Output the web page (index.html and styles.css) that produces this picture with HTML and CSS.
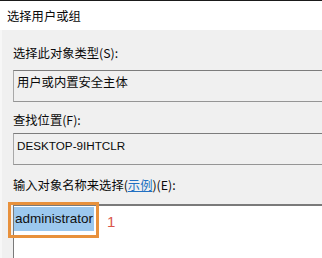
FILE: index.html
```html
<!DOCTYPE html>
<html lang="zh-CN">
<head>
<meta charset="utf-8">
<title>选择用户或组</title>
<link rel="stylesheet" href="styles.css">
</head>
<body>
<div class="dialog">
  <div class="titlebar">选择用户或组</div>
  <div class="content">
    <div class="label label-type">选择此对象类型(S):</div>
    <div class="field">用户或内置安全主体</div>
    <div class="label label-loc">查找位置(F):</div>
    <div class="field field-latin">DESKTOP-9IHTCLR</div>
    <div class="label label-name">输入对象名称来选择(<span class="link">示例</span>)(E):</div>
    <div class="textarea">
      <span class="selected">administrator</span>
      <div class="callout"></div>
      <div class="callout-num">1</div>
    </div>
  </div>
</div>
</body>
</html>
```

FILE: styles.css
```css
html, body {
  margin: 0;
  padding: 0;
}
body {
  width: 322px;
  height: 258px;
  overflow: hidden;
  background: #f0f0f0;
  color: #0a0a0a;
}
.dialog {
  width: 322px;
  height: 258px;
  overflow: hidden;
}
.titlebar {
  height: 29px;
  border-top: 1px solid #1a1a1a;
  background: #ffffff;
  display: flex;
  align-items: center;
  padding-left: 7px;
  font-family: "Noto Sans CJK SC", "Liberation Sans", sans-serif;
  font-size: 12.3px;
  color: #0a0a0a;
}
.content {
  background: #f0f0f0;
  border-left: 2px solid #f7f7f7;
  padding-left: 11px;
  display: flex;
  flex-direction: column;
}
.content > * {
  flex-shrink: 0;
}
.label {
  font-family: "Noto Sans CJK SC", "Liberation Sans", sans-serif;
  font-size: 12.3px;
  line-height: 16px;
  height: 16px;
  white-space: nowrap;
}
.label-type { margin-top: 15px; margin-bottom: 9px; }
.label-loc { margin-top: 10px; margin-bottom: 5px; }
.label-name { margin-top: 12px; margin-bottom: 11px; }
.link {
  color: #2270c2;
  text-decoration: underline;
}
.field {
  height: 32px;
  box-sizing: border-box;
  margin-right: -30px;
  border: 1px solid;
  border-color: #7c7c7c #a8a8a8 #959595 #a8a8a8;
  background: #f0f0f0;
  padding: 3px 0 0 3px;
  font-family: "Noto Sans CJK SC", "Liberation Sans", sans-serif;
  font-size: 12.3px;
  line-height: 16px;
  white-space: nowrap;
}
.field-latin {
  font-family: "Liberation Sans", sans-serif;
  font-size: 11.7px;
  padding-top: 4px;
}
.textarea {
  position: relative;
  height: 70px;
  margin-right: -30px;
  background: #ffffff;
  border-top: 2px solid #7a7a7a;
  border-left: 1px solid #7a7a7a;
  padding-top: 1px;
  font-family: "Liberation Sans", sans-serif;
  font-size: 13.5px;
}
.selected {
  display: inline-block;
  height: 24px;
  line-height: 24px;
  padding: 0 1px;
  background: #9cc8ee;
  color: #101010;
}
.callout {
  position: absolute;
  left: -6px;
  top: -4px;
  width: 85px;
  height: 30px;
  border: 3px solid #e8913c;
}
.callout-num {
  position: absolute;
  left: 93px;
  top: 8px;
  font-family: "Liberation Sans", sans-serif;
  font-size: 15px;
  line-height: 15px;
  color: #d9564a;
}
```
